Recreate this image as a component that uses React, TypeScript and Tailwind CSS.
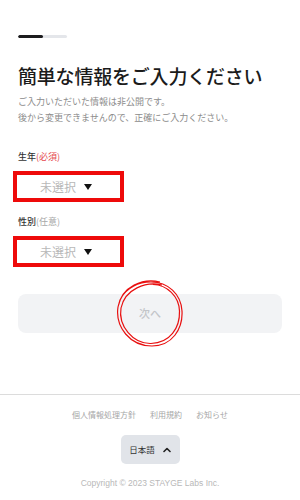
import React from "react";

const jp = { fontFamily: '"Noto Sans CJK JP", "Noto Sans", sans-serif' };

function SelectBox({ label, note, noteClass }: { label: string; note: string; noteClass: string }) {
  return (
    <>
      <div className="mt-[24px] text-[9px] leading-[14px] font-medium text-[#333]">
        {label}
        <span className={noteClass}>{note}</span>
      </div>
      <div className="-ml-[5px] mt-[7px] flex h-[31px] w-[111px] items-center border-4 border-[#ee0a0a] bg-white pl-[23px]">
        <span className="text-[12px] leading-none text-[#b8b8b8]">未選択</span>
        <span className="ml-[8px] mt-[1px] h-0 w-0 border-x-[4.5px] border-t-[6px] border-x-transparent border-t-[#111]" />
      </div>
    </>
  );
}

export default function App() {
  return (
    <div className="min-h-[500px] w-[300px] bg-white" style={jp}>
      <div className="px-[18px] pt-[35px]">
        <div className="flex h-[3px] w-[49px] overflow-hidden rounded-full bg-[#e4e6ea]">
          <div className="h-full w-[25px] rounded-full bg-[#1c1c1e]" />
        </div>

        <h1 className="mt-[26px] text-[19px] leading-[24px] font-medium tracking-[-0.2px] text-[#1b1b1b]">
          簡単な情報をご入力ください
        </h1>
        <p className="mt-[6px] text-[9px] leading-[16px] text-[#8c8c8c]">
          ご入力いただいた情報は非公開です。
          <br />
          後から変更できませんので、正確にご入力ください。
        </p>

        <SelectBox label="生年" note="(必須)" noteClass="font-normal text-[#e5484d]" />
        <div className="-mt-[11px]" />
        <SelectBox label="性別" note="(任意)" noteClass="font-normal text-[#a8a8a8]" />

        <div className="relative mt-[27px] flex h-[39px] items-center justify-center rounded-[8px] bg-[#f2f3f5]">
          <span className="text-[11px] font-medium text-[#c3c5c9]">次へ</span>
          <svg
            className="pointer-events-none absolute left-1/2 top-1/2 -translate-x-1/2 -translate-y-1/2"
            width="70"
            height="70"
            viewBox="0 0 70 70"
            fill="none"
            stroke="#e81010"
            strokeWidth="1.2"
          >
            <path d="M45 3 C28 -1 7 7 3 28 C0 48 15 67 37 67 C57 67 68 50 67 32 C66 15 53 3 36 3 C23 3 12 9 6 19" />
            <path d="M47 6 C31 2 10 10 6 29 C3 47 18 65 36 64.5 C55 64 65 49 64.5 32 C64 17 52 6 38 5.5" />
          </svg>
        </div>
      </div>

      <div className="mt-[61px] border-t border-[#dcdcdc]" />

      <div className="mt-[14px] flex justify-center gap-[14px] text-[8px] leading-[12px] text-[#a6a6a6]">
        <span>個人情報処理方針</span>
        <span>利用規約</span>
        <span>お知らせ</span>
      </div>

      <div className="mt-[14px] flex justify-center">
        <div className="flex h-[29px] w-[59px] items-center justify-center gap-[8px] rounded-[5px] bg-[#e1e4e9] text-[8.5px] text-[#333]">
          <span>日本語</span>
          <svg width="8" height="6" viewBox="0 0 8 6" fill="none" stroke="#222" strokeWidth="1.6" strokeLinecap="round" strokeLinejoin="round">
            <path d="M1 4.5 L4 1.5 L7 4.5" />
          </svg>
        </div>
      </div>

      <div
        className="mt-[13px] text-center text-[8.5px] leading-[12px] text-[#b8b8b8]"
        style={{ fontFamily: '"Liberation Sans", Arial, sans-serif' }}
      >
        Copyright © 2023 STAYGE Labs Inc.
      </div>
    </div>
  );
}
